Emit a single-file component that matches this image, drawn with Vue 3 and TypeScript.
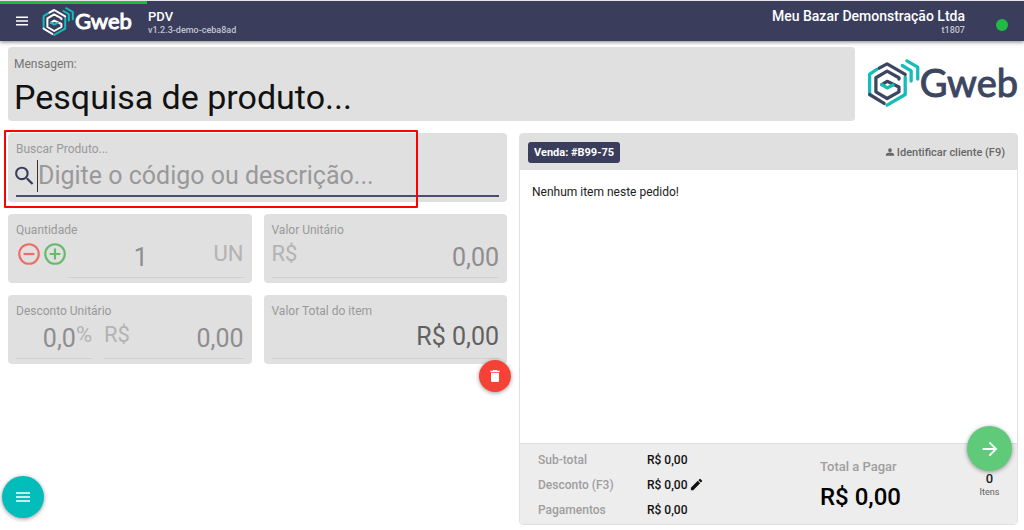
<script setup lang="ts">
import { ref } from 'vue'

interface TotalLine {
  label: string
  value: string
  editable: boolean
}

const search = ref('')
const quantity = ref('1')
const unitPrice = ref('0,00')
const discountPercent = ref('0,0')
const discountValue = ref('0,00')

const totals: TotalLine[] = [
  { label: 'Sub-total', value: 'R$ 0,00', editable: false },
  { label: 'Desconto (F3)', value: 'R$ 0,00', editable: true },
  { label: 'Pagamentos', value: 'R$ 0,00', editable: false },
]
</script>

<template>
  <div class="page">
    <header class="topbar">
      <div class="progress"></div>
      <button class="icon-button menu" type="button" aria-label="Menu">
        <svg viewBox="0 0 12 10"><path d="M0 1.2h12M0 5h12M0 8.8h12" stroke="currentColor" stroke-width="1.6" /></svg>
      </button>
      <div class="brand brand-small">
        <svg class="mark" viewBox="0 0 160 150" fill="none" stroke-width="10" stroke-linecap="round" stroke-linejoin="round">
          <path class="accent" d="M30 37 8 51v60M61 145l55-32V60" />
          <path class="ink" d="M37 33 61 20l55 32M8 113l44 27" />
          <path class="ink" d="M97 66V62L61 42 27 62v43l34 20 36-20V90L61 73 45 83" />
          <path class="accent" d="m45 83 16 10 18-9" />
          <path class="accent" d="m107 25 27 16v31M121 11l33 19v36" />
        </svg>
        <span class="wordmark">Gweb</span>
      </div>
      <div class="heading">
        <strong>PDV</strong>
        <small>v1.2.3-demo-ceba8ad</small>
      </div>
      <div class="company">
        <strong>Meu Bazar Demonstração Ltda</strong>
        <small>t1807</small>
      </div>
      <span class="status"></span>
    </header>

    <main class="content">
      <div class="intro">
        <section class="card message">
          <span>Mensagem:</span>
          <h1>Pesquisa de produto...</h1>
        </section>
        <div class="brand brand-large">
          <svg class="mark" viewBox="0 0 160 150" fill="none" stroke-width="10" stroke-linecap="round" stroke-linejoin="round">
            <path class="accent" d="M30 37 8 51v60M61 145l55-32V60" />
            <path class="ink" d="M37 33 61 20l55 32M8 113l44 27" />
            <path class="ink" d="M97 66V62L61 42 27 62v43l34 20 36-20V90L61 73 45 83" />
            <path class="accent" d="m45 83 16 10 18-9" />
            <path class="accent" d="m107 25 27 16v31M121 11l33 19v36" />
          </svg>
          <span class="wordmark">Gweb</span>
        </div>
      </div>

      <div class="columns">
        <form class="entry" @submit.prevent>
          <div class="card wide highlighted">
            <label for="search">Buscar Produto...</label>
            <div class="field active">
              <svg class="search-icon" viewBox="0 0 24 24" fill="currentColor"><path d="M15.5 14h-.79l-.28-.27A6.47 6.47 0 0 0 16 9.5 6.5 6.5 0 1 0 9.5 16c1.61 0 3.09-.59 4.23-1.57l.27.28v.79l5 4.99L20.49 19l-4.99-5zm-6 0C7.01 14 5 11.99 5 9.5S7.01 5 9.5 5 14 7.01 14 9.5 11.99 14 9.5 14z" /></svg>
              <input id="search" v-model="search" class="search-input" type="text" placeholder="Digite o código ou descrição..." />
            </div>
          </div>

          <div class="card">
            <label for="quantity">Quantidade</label>
            <div class="quantity">
              <button class="icon-button step minus" type="button" aria-label="Diminuir">
                <svg viewBox="0 0 24 24" fill="none" stroke="currentColor" stroke-width="2"><circle cx="12" cy="12" r="9" /><path d="M7 12h10" /></svg>
              </button>
              <button class="icon-button step plus" type="button" aria-label="Aumentar">
                <svg viewBox="0 0 24 24" fill="none" stroke="currentColor" stroke-width="2"><circle cx="12" cy="12" r="9" /><path d="M7 12h10M12 7v10" /></svg>
              </button>
              <div class="field">
                <input id="quantity" v-model="quantity" class="centered" type="text" />
                <span class="affix">UN</span>
              </div>
            </div>
          </div>

          <div class="card">
            <label for="unit-price">Valor Unitário</label>
            <div class="field">
              <span class="affix">R$</span>
              <input id="unit-price" v-model="unitPrice" type="text" />
            </div>
          </div>

          <div class="card">
            <label for="discount-percent">Desconto Unitário</label>
            <div class="discount">
              <div class="field percent">
                <input id="discount-percent" v-model="discountPercent" type="text" />
                <span class="affix">%</span>
              </div>
              <div class="field">
                <span class="affix">R$</span>
                <input v-model="discountValue" type="text" aria-label="Desconto em reais" />
              </div>
            </div>
          </div>

          <div class="card">
            <label for="item-total">Valor Total do item</label>
            <div class="field">
              <output id="item-total">R$ 0,00</output>
            </div>
            <button class="fab remove" type="button" aria-label="Remover item">
              <svg viewBox="0 0 24 24" fill="currentColor"><path d="M6 19c0 1.1.9 2 2 2h8c1.1 0 2-.9 2-2V7H6v12zM19 4h-3.500l-1-1h-5l-1 1H5v2h14V4z" /></svg>
            </button>
          </div>
        </form>

        <section class="order">
          <div class="order-head">
            <span class="badge">Venda: #B99-75</span>
            <button class="icon-button customer" type="button">
              <svg viewBox="0 0 24 24" fill="currentColor"><path d="M12 12a4.500 4.500 0 1 0 0-9 4.500 4.500 0 0 0 0 9zm0 1c-4 0-10 2-10 5v3h20v-3c0-3-6-5-10-5z" /></svg>
              Identificar cliente (F9)
            </button>
          </div>
          <p class="empty">Nenhum item neste pedido!</p>
          <footer class="order-foot">
            <dl class="lines">
              <template v-for="line in totals" :key="line.label">
                <dt>{{ line.label }}</dt>
                <dd>
                  {{ line.value }}
                  <button v-if="line.editable" class="icon-button edit" type="button" aria-label="Editar desconto">
                    <svg viewBox="0 0 24 24" fill="currentColor"><path d="M3 17.250V21h3.750L17.810 9.940l-3.750-3.750L3 17.250zM20.710 7.040a1 1 0 0 0 0-1.410l-2.340-2.340a1 1 0 0 0-1.410 0l-1.830 1.830 3.750 3.750 1.830-1.830z" /></svg>
                  </button>
                </dd>
              </template>
            </dl>
            <div class="due">
              <span>Total a Pagar</span>
              <strong>R$ 0,00</strong>
            </div>
            <div class="items">
              <button class="fab next" type="button" aria-label="Avançar">
                <svg viewBox="0 0 24 24" fill="currentColor"><path d="m12 4-1.410 1.410L16.170 11H4v2h12.170l-5.580 5.590L12 20l8-8z" /></svg>
              </button>
              <strong>0</strong>
              <span>Itens</span>
            </div>
          </footer>
        </section>
      </div>
    </main>

    <button class="fab options" type="button" aria-label="Opções">
      <svg viewBox="0 0 14 10"><path d="M0 1h14M0 5h14M0 9h14" stroke="currentColor" stroke-width="1.5" /></svg>
    </button>
  </div>
</template>

<style>
body {
  background: #fff;
}
</style>

<style scoped>
*,
*::after {
  box-sizing: border-box;
}

.page {
  display: flex;
  flex-direction: column;
  min-height: 100vh;
  font-family: Roboto, "Liberation Sans", sans-serif;
  font-size: 12px;
  color: #212121;
}

button,
input {
  font: inherit;
  margin: 0;
  padding: 0;
  border: 0;
  background: none;
}

svg {
  display: block;
}

.icon-button {
  display: flex;
  align-items: center;
  color: inherit;
  cursor: pointer;
}

.topbar {
  position: relative;
  display: flex;
  align-items: center;
  height: 41px;
  padding: 2px 16px 0;
  border-top: 1px solid #e4e4ea;
  background: #3a3d5c;
  color: #fff;
  box-shadow: 0 1px 4px rgba(0, 0, 0, 0.5);
}

.progress {
  position: absolute;
  top: 0;
  left: 0;
  width: 147px;
  height: 3px;
  background: #21ba45;
}

.menu svg {
  width: 12px;
  height: 10px;
}

.menu {
  padding-bottom: 2px;
}

.brand {
  display: flex;
  align-items: center;
}

.wordmark {
  font-family: Lato, sans-serif;
  font-weight: 400;
  -webkit-text-stroke: 1px currentColor;
}

.accent {
  stroke: #14bdb9;
}

.brand-small {
  margin-left: 14px;
  width: 106px;
  padding-bottom: 3px;
}

.brand-small .mark {
  width: 32px;
  height: 30px;
}

.brand-small .wordmark {
  font-size: 22px;
  line-height: 26px;
  padding-left: 1px;
}

.brand-small .ink {
  stroke: #fff;
}

.heading,
.company {
  display: flex;
  flex-direction: column;
}

.heading strong,
.company strong {
  font-size: 13px;
  line-height: 15px;
  font-weight: 500;
}

.company strong {
  font-size: 14px;
}

.heading small,
.company small {
  font-size: 9px;
  line-height: 12px;
  font-weight: 500;
  color: #c4c5d0;
}

.company {
  margin-left: auto;
  text-align: right;
}

.status {
  width: 12px;
  height: 12px;
  margin: 6px 0 0 31px;
  border-radius: 50%;
  background: #21ba45;
}

.content {
  flex: 1;
  display: flex;
  flex-direction: column;
  gap: 12px;
  padding: 6px 6px 5px 8px;
}

.intro {
  display: flex;
  gap: 12px;
}

.card {
  position: relative;
  padding: 8px 8px 5px;
  border-radius: 4px;
  background: #e0e0e0;
}

.message {
  flex: 1;
  padding: 9px 6px 4px;
  color: #757575;
}

.message span {
  display: block;
  line-height: 16px;
}

.message h1 {
  margin: 5px 0 0;
  font-size: 34px;
  line-height: 40px;
  font-weight: 400;
  color: #111;
}

.brand-large {
  width: 151px;
  padding-bottom: 5px;
  color: #3d4660;
}

.brand-large .mark {
  width: 54px;
  height: 50px;
}

.brand-large .wordmark {
  font-size: 38px;
  line-height: 44px;
}

.brand-large .ink {
  stroke: #3d4660;
}

.columns {
  flex: 1;
  display: grid;
  grid-template-columns: 1fr 1fr;
  gap: 12px;
}

.entry {
  display: grid;
  grid-template-columns: 1fr 1fr;
  align-content: start;
  gap: 12px;
}

.wide {
  grid-column: 1 / -1;
}

.highlighted::after {
  content: "";
  position: absolute;
  top: -3px;
  left: -4px;
  width: 83%;
  height: 78px;
  border: 2px solid #f00;
  border-radius: 1px;
  pointer-events: none;
}

.card label {
  display: block;
  line-height: 16px;
  color: #999;
}

.field {
  flex: 1;
  display: flex;
  align-items: center;
  min-width: 0;
  height: 40px;
  border-bottom: 1px solid #d0d0d0;
}

.active {
  border-bottom: 2px solid #4a4d6e;
}

.field input,
.field output {
  flex: 1;
  min-width: 0;
  width: 0;
  height: 32px;
  font-size: 25px;
  line-height: 32px;
  text-align: right;
  color: #8e8e8e;
  outline: none;
}

.field output {
  align-self: flex-start;
  line-height: 36px;
  color: #616161;
}

.field .centered {
  text-align: center;
}

.field .search-input {
  border-left: 1px solid #333;
  text-align: left;
}

.search-input::placeholder {
  color: #999;
  opacity: 1;
}

.search-icon {
  width: 25px;
  height: 26px;
  margin-left: -4px;
  color: #3a3d5c;
}

.affix {
  align-self: flex-start;
  font-size: 22px;
  line-height: 31px;
  color: #b3b3b3;
}

.quantity,
.discount {
  display: flex;
}

.discount {
  gap: 12px;
}

.discount .percent {
  flex: 0 0 76px;
}

.step {
  align-self: flex-start;
  margin-top: 3px;
}

.step svg {
  width: 26px;
  height: 26px;
}

.minus {
  color: #ef6c67;
}

.plus {
  color: #66bb6a;
}

.fab {
  display: flex;
  align-items: center;
  justify-content: center;
  border-radius: 50%;
  color: #fff;
  box-shadow: 0 1px 4px rgba(0, 0, 0, 0.4);
  cursor: pointer;
}

.remove {
  position: absolute;
  right: -4px;
  bottom: -28px;
  width: 32px;
  height: 32px;
  background: #f44336;
}

.remove svg {
  width: 16px;
  height: 16px;
}

.order {
  display: flex;
  flex-direction: column;
  border: 1px solid #e0e0e0;
  border-radius: 4px;
}

.order-head {
  display: flex;
  align-items: center;
  justify-content: space-between;
  height: 36px;
  padding: 0 12px 0 8px;
  background: #e0e0e0;
}

.badge {
  padding: 0 6px;
  border-radius: 3px;
  background: #3a3d5c;
  color: #fff;
  font-size: 11px;
  line-height: 21px;
  font-weight: 700;
}

.customer {
  gap: 2px;
  font-size: 11px;
  font-weight: 500;
  color: #666;
}

.customer svg {
  width: 10px;
  height: 10px;
}

.empty {
  flex: 1;
  margin: 0;
  padding: 14px 12px;
  line-height: 16px;
}

.order-foot {
  display: grid;
  grid-template-columns: 280fr 146fr 45px;
  padding: 3px 5px 2px 18px;
  border-top: 1px solid #ddd;
  border-radius: 0 0 4px 4px;
  background: #ededed;
  font-weight: 500;
}

.lines {
  display: grid;
  grid-template-columns: 109px 1fr;
  grid-auto-rows: 25px;
  align-items: center;
  margin: 0;
}

.lines dt {
  color: #9e9e9e;
}

.lines dd {
  display: flex;
  align-items: center;
  gap: 1px;
  margin: 0;
  color: #111;
}

.edit svg {
  width: 15px;
  height: 15px;
}

.due {
  display: flex;
  flex-direction: column;
  padding-top: 11px;
}

.due span {
  font-size: 13px;
  line-height: 18px;
  color: #9e9e9e;
}

.due strong {
  font-size: 24px;
  line-height: 42px;
  font-weight: 500;
  color: #000;
}

.items {
  position: relative;
  display: flex;
  flex-direction: column;
  align-items: center;
  padding-top: 24px;
}

.items strong {
  font-size: 13px;
  line-height: 16px;
  font-weight: 500;
}

.items span {
  font-size: 9px;
  line-height: 10px;
  font-weight: 400;
  color: #616161;
}

.next {
  position: absolute;
  top: -21px;
  left: 0;
  width: 45px;
  height: 45px;
  background: #5fcb7a;
}

.next svg {
  width: 22px;
  height: 22px;
}

.options {
  position: fixed;
  left: 2px;
  bottom: 12px;
  width: 42px;
  height: 42px;
  background: #02bdb9;
}

.options svg {
  width: 14px;
  height: 10px;
}
</style>
